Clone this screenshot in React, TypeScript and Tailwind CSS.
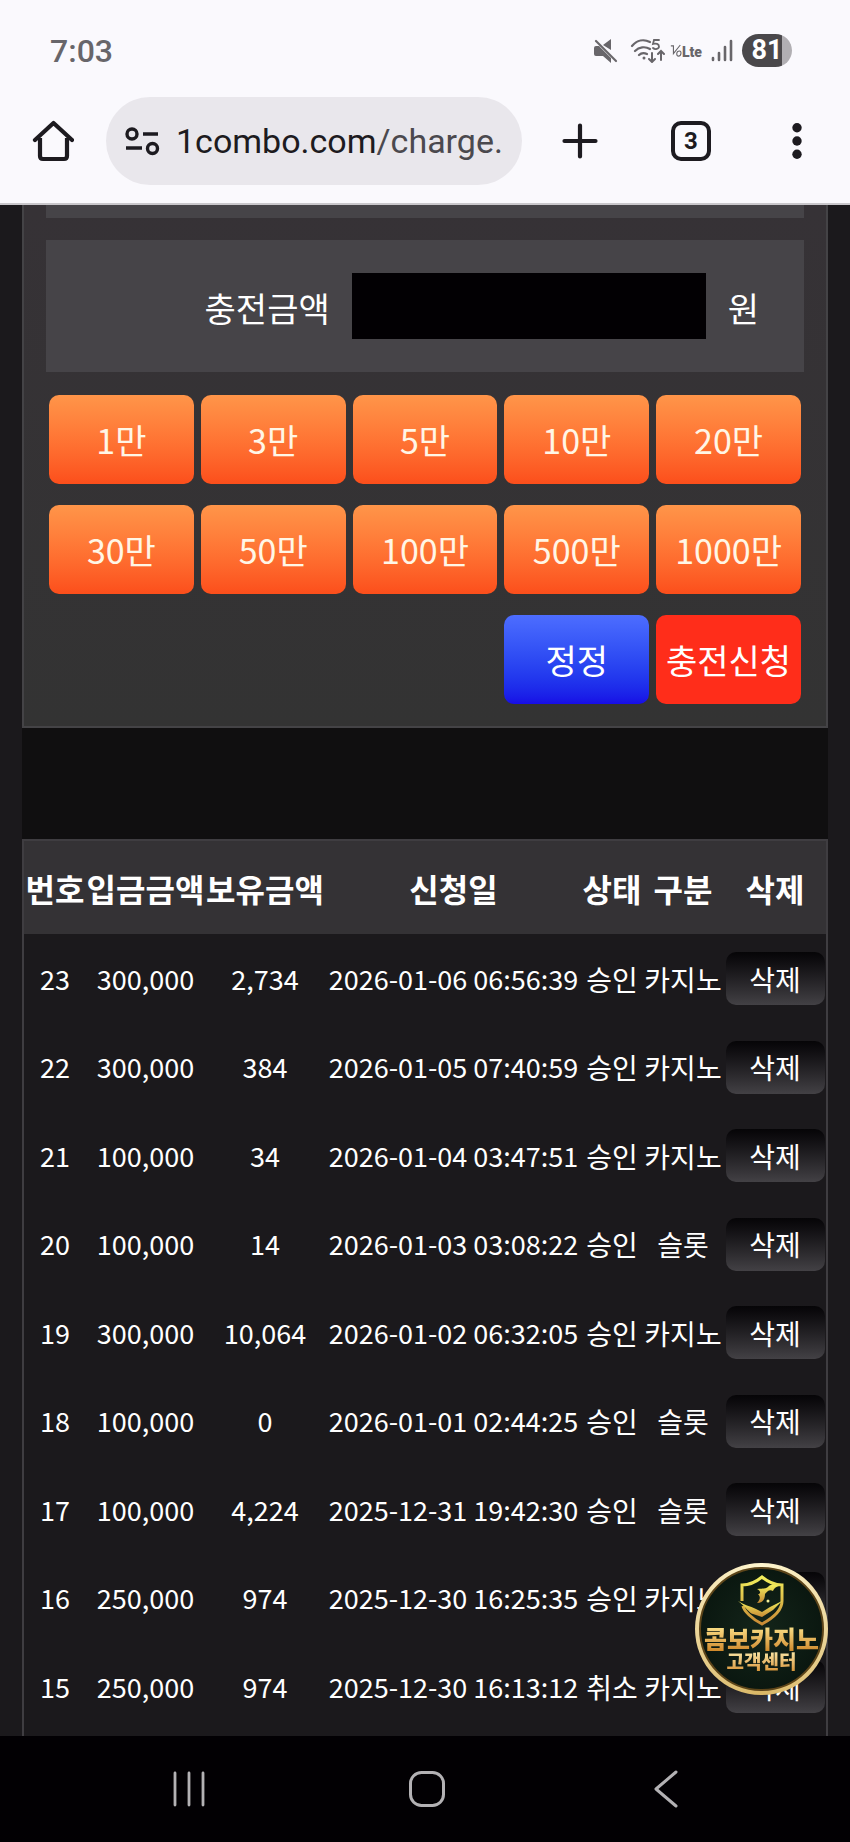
import React, { useState } from 'react';

const quickAmounts = [
  { label: '1만', value: 10000 },
  { label: '3만', value: 30000 },
  { label: '5만', value: 50000 },
  { label: '10만', value: 100000 },
  { label: '20만', value: 200000 },
  { label: '30만', value: 300000 },
  { label: '50만', value: 500000 },
  { label: '100만', value: 1000000 },
  { label: '500만', value: 5000000 },
  { label: '1000만', value: 10000000 },
];

const columns = [
  { label: '번호', width: 'w-[62px]' },
  { label: '입금금액', width: 'w-[119px]' },
  { label: '보유금액', width: 'w-[120px]' },
  { label: '신청일', width: 'w-[257px]' },
  { label: '상태', width: 'w-[60px]' },
  { label: '구분', width: 'w-[82px]' },
  { label: '삭제', width: 'w-[102px]' },
];

const initialRows = [
  { no: 23, amount: '300,000', balance: '2,734', date: '2026-01-06 06:56:39', status: '승인', type: '카지노' },
  { no: 22, amount: '300,000', balance: '384', date: '2026-01-05 07:40:59', status: '승인', type: '카지노' },
  { no: 21, amount: '100,000', balance: '34', date: '2026-01-04 03:47:51', status: '승인', type: '카지노' },
  { no: 20, amount: '100,000', balance: '14', date: '2026-01-03 03:08:22', status: '승인', type: '슬롯' },
  { no: 19, amount: '300,000', balance: '10,064', date: '2026-01-02 06:32:05', status: '승인', type: '카지노' },
  { no: 18, amount: '100,000', balance: '0', date: '2026-01-01 02:44:25', status: '승인', type: '슬롯' },
  { no: 17, amount: '100,000', balance: '4,224', date: '2025-12-31 19:42:30', status: '승인', type: '슬롯' },
  { no: 16, amount: '250,000', balance: '974', date: '2025-12-30 16:25:35', status: '승인', type: '카지노' },
  { no: 15, amount: '250,000', balance: '974', date: '2025-12-30 16:13:12', status: '취소', type: '카지노' },
];

function StatusBar() {
  return (
    <div className="flex h-[97px] items-center justify-between pt-1 pr-[58px] pl-[50px] text-[#68666a]">
      <span className="font-['Roboto',sans-serif] text-[32px] leading-8 font-medium">7:03</span>
      <div className="flex items-center">
        {/* Muted */}
        <svg className="mr-3 h-6 w-6" viewBox="0 0 24 24" fill="currentColor">
          <path d="M0 9q0-2 2-2h3l12 12v5l-8-7H2q-2 0-2-2zM9 6l8-6v11z" />
          <path d="M2 2l20 20" stroke="currentColor" strokeWidth="2.200" strokeLinecap="round" />
        </svg>
        {/* Wifi */}
        <svg className="mr-1 h-6 w-[36px]" viewBox="0 0 36 24" fill="none" stroke="currentColor" strokeWidth="2.200" strokeLinecap="round">
          <path d="M2 7C7 1 14 0 20 3M5 12c4-4 10-5 15-2M9 16c3-3 6-2 8-1" />
          <circle cx="14" cy="19" r="1.500" fill="currentColor" stroke="none" />
          <path d="M22 14v8M19 20l3 3 3-3M31 21v-8M28 15l3-3 3 3" strokeWidth="2" />
          <path d="M29 1h-5l-1 4c3-1 6 0 6 2.500S25 11 23 9" strokeWidth="1.800" />
        </svg>
        <span className="mr-2 flex items-end">
          <svg className="h-4 w-3" viewBox="0 0 14 16" fill="none" stroke="currentColor" strokeWidth="1.300">
            <path d="M1 2h3v9L12 1M11 8c-4 0-4 6-1 6s4-6 1-6" />
          </svg>
          <b className="font-['Roboto',sans-serif] text-[14px] leading-[14px] font-black">Lte</b>
        </span>
        {/* Signal */}
        <svg className="mr-2 h-6 w-6" viewBox="0 0 24 24" stroke="currentColor" strokeWidth="2.600" strokeLinecap="round">
          <path d="M3 19v2M9 14v7M15 8v13M21 2v19" />
        </svg>
        <span className="flex h-[33px] w-[50px] items-center justify-center rounded-full bg-linear-to-r from-[#4a484b] from-80% to-[#b1afb3] to-80% font-['Roboto',sans-serif] text-[27px] leading-[33px] font-bold text-white">
          81
        </span>
      </div>
    </div>
  );
}

function BrowserBar() {
  return (
    <div className="flex h-[106px] items-start pr-[41px] pl-[32px] text-[#1d1b20]">
      <button type="button" aria-label="Home" className="flex h-[88px] w-[42px] items-center">
        <svg className="h-[42px] w-[42px]" viewBox="0 0 42 42" fill="none" stroke="currentColor" strokeWidth="4.200" strokeLinejoin="round">
          <path d="M8 18v18q0 3 3 3h21q3 0 3-3V18" />
          <path d="M3 20L21.500 3 40 20" strokeLinecap="round" />
        </svg>
      </button>
      <div className="ml-8 flex h-[88px] min-w-0 flex-1 items-center rounded-full bg-[#e9e7ec] pr-[16px] pl-[19px]">
        <svg className="h-[30px] w-[35px] shrink-0" viewBox="0 0 35 30" fill="none" stroke="currentColor" strokeWidth="3.400">
          <circle cx="7" cy="8" r="5" />
          <circle cx="27.500" cy="22.500" r="5" />
          <path d="M18 8h15M1 22h16" />
        </svg>
        <a
          href="#charge"
          className="ml-[16px] flex-1 overflow-hidden font-['Roboto',sans-serif] text-[34px] leading-[48px] whitespace-nowrap text-[#1d1b20]"
        >
          1combo.com<span className="text-[#4b494e]">/charge.</span>
        </a>
      </div>
      <button type="button" aria-label="New tab" className="ml-10 flex h-[88px] w-9 items-center">
        <svg className="h-9 w-9" viewBox="0 0 36 36" stroke="currentColor" strokeWidth="4.200" strokeLinecap="round">
          <path d="M18 2.500v31M2.500 18h31" />
        </svg>
      </button>
      <button type="button" aria-label="Tabs" className="ml-[73px] flex h-[88px] w-10 items-center">
        <span className="flex h-10 w-10 items-center justify-center rounded-[10px] border-4 border-[#1d1b20] font-['Roboto',sans-serif] text-2xl font-bold">
          3
        </span>
      </button>
      <button type="button" aria-label="Menu" className="ml-[74px] flex h-[88px] w-[24px] items-center justify-center">
        <svg className="h-9 w-3" viewBox="0 0 12 36" fill="currentColor">
          <circle cx="6" cy="4.700" r="4.700" />
          <circle cx="6" cy="18" r="4.700" />
          <circle cx="6" cy="31.300" r="4.700" />
        </svg>
      </button>
    </div>
  );
}

function SupportBadge() {
  return (
    <button
      type="button"
      className="absolute right-[22px] bottom-[41px] h-[132px] w-[133px] rounded-full bg-conic from-[#fff6cf] via-[#d9b765] to-[#fff6cf] p-[4px]"
    >
      <span className="flex h-full w-full flex-col items-center rounded-full border-2 border-[#5c4419] bg-radial from-[#14251a] to-[#07120c] pt-[5px] font-['Noto_Sans_CJK_KR',sans-serif]">
        <svg className="h-[52px] w-[48px] shrink-0" viewBox="0 0 48 52" fill="none">
          <defs>
            <linearGradient id="gold" x1="0" y1="0" x2="0" y2="1">
              <stop offset="0" stopColor="#f2ef5c" />
              <stop offset="1" stopColor="#c98a35" />
            </linearGradient>
          </defs>
          <path
            d="M4 27V11c8 0 14-3 20-8 6 5 12 8 20 8v16c0 10-9 17-20 23C14 45 6 37 5 32"
            stroke="url(#gold)"
            strokeWidth="3"
          />
          <path d="M0 27c6 4 12 5 18 8l6 3 8-5 12-6-9 9-11 7-9-3C11 39 8 33 0 27z" fill="url(#gold)" />
          <path
            d="M19 15c5-1 8 1 12-3 3-2 7-1 10 0-4 1-5 3-6 5-4-2-6 1-8 3 0 5-2 9-8 9 3-3 4-6 1-9 3 0 3-3-1-5z"
            fill="url(#gold)"
          />
          <circle cx="30" cy="27" r="1.500" fill="#f2ef9c" />
        </svg>
        <span className="bg-linear-to-b from-[#fbe38a] to-[#d08a2a] bg-clip-text text-[25px] leading-[25px] font-black whitespace-nowrap text-transparent">
          콤보카지노
        </span>
        <span className="bg-linear-to-b from-[#fbe9a8] to-[#d9973a] bg-clip-text text-[19px] leading-[20px] font-black whitespace-nowrap text-transparent">
          고객센터
        </span>
      </span>
    </button>
  );
}

function SystemNav() {
  return (
    <nav className="flex h-[106px] items-center justify-center gap-[198px] bg-[#020003] pl-1 text-[#b3b1b4]">
      <button type="button" aria-label="Recents">
        <svg className="h-10 w-10" viewBox="0 0 40 40" stroke="currentColor" strokeWidth="2.800" strokeLinecap="round">
          <path d="M6 4v32M20 4v32M34 4v32" />
        </svg>
      </button>
      <button type="button" aria-label="Home">
        <svg className="h-10 w-10" viewBox="0 0 40 40" fill="none" stroke="currentColor" strokeWidth="3">
          <rect x="3.500" y="3.500" width="33" height="33" rx="11" />
        </svg>
      </button>
      <button type="button" aria-label="Back">
        <svg className="h-10 w-10" viewBox="0 0 40 40" fill="none" stroke="currentColor" strokeWidth="3" strokeLinecap="round" strokeLinejoin="round">
          <path d="M31 3L11 20l20 17" />
        </svg>
      </button>
    </nav>
  );
}

export default function App() {
  const [amount, setAmount] = useState(0);
  const [rows, setRows] = useState(initialRows);

  const addAmount = (value: number) => setAmount(amount + value);
  const removeRow = (no: number) => setRows(rows.filter((row) => row.no !== no));

  return (
    <div className="flex min-h-screen flex-col bg-[#1b191c] font-['Noto_Sans_CJK_KR',sans-serif] text-white">
      <header className="border-b-2 border-[#c9c7cb] bg-[#faf9fd]">
        <StatusBar />
        <BrowserBar />
      </header>

      <main className="relative flex flex-1 flex-col px-[22px]">
        {/* Charge form */}
        <form
          className="border-x-2 border-b-2 border-[#444346] bg-linear-to-b from-[#363236] to-[#333333] px-[22px] pb-[22px]"
          onSubmit={(e) => e.preventDefault()}
        >
          <div className="h-[13px] bg-[#464448]" />
          <div className="mt-[22px] flex h-[132px] items-center justify-end bg-[#464448] pr-[45px] text-[34px] leading-[50px]">
            <label htmlFor="amount" className="pt-1">
              충전금액
            </label>
            <input
              id="amount"
              type="text"
              inputMode="numeric"
              className="ml-[22px] h-[66px] w-[354px] bg-[#020003] px-4 text-right outline-none"
              value={amount ? amount.toLocaleString() : ''}
              onChange={(e) => setAmount(Number(e.target.value.replace(/\D/g, '')))}
            />
            <span className="ml-[22px] pt-1">원</span>
          </div>
          <div className="mt-[23px] grid grid-cols-5 gap-x-[7px] gap-y-[21px] px-[3px] text-[34px] leading-[50px]">
            {quickAmounts.map((item) => (
              <button
                key={item.value}
                type="button"
                onClick={() => addAmount(item.value)}
                className="h-[89px] rounded-[10px] bg-linear-to-b from-[#ff9549] to-[#fc4e1b] text-[#fff6e6]"
              >
                {item.label}
              </button>
            ))}
            <button
              type="button"
              onClick={() => setAmount(0)}
              className="col-start-4 h-[89px] rounded-[10px] bg-linear-to-b from-[#4d6dff] to-[#180ce6]"
            >
              정정
            </button>
            <button type="submit" className="h-[89px] rounded-[10px] bg-[#ff2d1a] whitespace-nowrap">
              충전신청
            </button>
          </div>
        </form>

        <div className="h-[111px] bg-[#100f10]" />

        {/* Charge history */}
        <section className="flex-1 border-x-2 border-t-2 border-[#3f3d41]">
          <table className="w-full table-fixed border-collapse text-center whitespace-nowrap">
            <thead>
              <tr className="h-[93px] bg-[#343235] text-[32px] leading-[46px]">
                {columns.map((col) => (
                  <th key={col.label} className={`${col.width} p-0 font-bold`}>
                    <span className="-mx-4">{col.label}</span>
                  </th>
                ))}
              </tr>
            </thead>
            <tbody className="text-[28px] leading-[40px]">
              {rows.map((row) => (
                <tr key={row.no} className="h-[88px] odd:h-[89px]">
                  <td className="p-0 text-[27px]">{row.no}</td>
                  <td className="p-0 text-[27px]">{row.amount}</td>
                  <td className="p-0 text-[27px]">{row.balance}</td>
                  <td className="p-0 text-[27px]">{row.date}</td>
                  <td className="p-0">{row.status}</td>
                  <td className="p-0">{row.type}</td>
                  <td className="p-0">
                    <button
                      type="button"
                      onClick={() => removeRow(row.no)}
                      className="mx-auto block h-[53px] w-[99px] rounded-[10px] bg-linear-to-b from-[#060507] to-[#434145]"
                    >
                      삭제
                    </button>
                  </td>
                </tr>
              ))}
            </tbody>
          </table>
        </section>

        <SupportBadge />
      </main>

      <SystemNav />
    </div>
  );
}
